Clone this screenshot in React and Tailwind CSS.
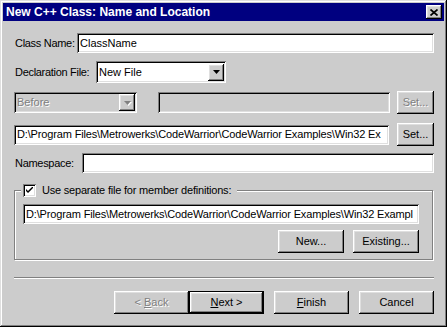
import React from 'react';

const RAISED = 'shadow-[inset_-1px_-1px_0_#000,inset_1px_1px_0_#fff,inset_-2px_-2px_0_#808080,inset_2px_2px_0_#dfdfdf]';
const SUNKEN = 'shadow-[inset_1px_1px_0_#808080,inset_-1px_-1px_0_#fff,inset_2px_2px_0_#000,inset_-2px_-2px_0_#dfdfdf]';
const DISABLED_TEXT = 'text-[#808080] [text-shadow:1px_1px_0_#fff]';

function Arrow({ disabled }) {
  return (
    <div className={'w-[16px] h-[17px] bg-[#cccccc] flex items-center justify-center shrink-0 ' + RAISED}>
      <svg width="7" height="4" viewBox="0 0 7 4" className={disabled ? 'drop-shadow-[1px_1px_0_#fff]' : ''}>
        <polygon points="0,0 7,0 3.5,4" fill={disabled ? '#808080' : '#000'} />
      </svg>
    </div>
  );
}

function Button({ className = '', disabled, children }) {
  return (
    <div className={'h-[23px] bg-[#cccccc] flex items-center justify-center shrink-0 whitespace-nowrap ' + RAISED + ' ' + (disabled ? DISABLED_TEXT : '') + ' ' + className}>
      {children}
    </div>
  );
}

function Field({ className = '', children, white = true }) {
  return (
    <div className={'h-[20px] flex items-center pl-[3px] pr-[1px] overflow-hidden whitespace-nowrap shrink-0 ' + (white ? 'bg-white ' : 'bg-[#cccccc] ') + SUNKEN + ' ' + className}>
      {children}
    </div>
  );
}

export default function App() {
  return (
    <div className={"w-[447px] h-[327px] bg-[#cccccc] p-[3px] font-['Liberation_Sans',Arial,sans-serif] text-[11px] leading-none text-black select-none shadow-[inset_-1px_-1px_0_#000,inset_1px_1px_0_#dfdfdf,inset_-2px_-2px_0_#808080,inset_2px_2px_0_#fff]"}>
      {/* title bar */}
      <div className="h-[18px] bg-[#000080] flex items-center justify-between pl-[3px] pr-[2px]">
        <span className="text-white font-bold text-[12px]">New C++ Class: Name and Location</span>
        <div className={'w-[16px] h-[14px] bg-[#cccccc] flex items-center justify-center ' + RAISED}>
          <svg width="8" height="7" viewBox="0 0 8 7">
            <path d="M0.5 0.5 L7.5 6.5 M7.5 0.5 L0.5 6.5" stroke="#000" strokeWidth="1.7" />
          </svg>
        </div>
      </div>

      <div className="ml-[11px] w-[420px]">
        {/* class name */}
        <div className="mt-[12px] h-[20px] flex items-center">
          <span className="w-[63px] pl-[1px] shrink-0 whitespace-nowrap tracking-[-0.3px]">Class Name:</span>
          <Field className="w-[357px]">ClassName</Field>
        </div>

        {/* declaration file */}
        <div className="mt-[8px] h-[22px] flex items-center">
          <span className="w-[82px] pl-[1px] shrink-0 whitespace-nowrap tracking-[-0.3px]">Declaration File:</span>
          <div className={'w-[130px] h-[22px] bg-white flex items-center pl-[3px] pr-[2px] ' + SUNKEN}>
            <span className="flex-1">New File</span>
            <Arrow />
          </div>
        </div>

        {/* disabled row */}
        <div className="mt-[9px] h-[21px] flex items-center">
          <div className={'w-[123px] h-[21px] bg-[#cccccc] flex items-center pl-[3px] pr-[2px] ' + SUNKEN}>
            <span className={'flex-1 ' + DISABLED_TEXT}>Before</span>
            <Arrow disabled />
          </div>
          <Field white={false} className="ml-[21px] w-[232px] h-[21px]" />
          <Button disabled className="ml-[7px] w-[37px] h-[21px]">Set...</Button>
        </div>

        {/* path */}
        <div className="mt-[11px] h-[21px] flex items-center">
          <Field className="w-[375px] tracking-[-0.15px]">
            {'D:\\Program Files\\Metrowerks\\CodeWarrior\\CodeWarrior Examples\\Win32 Ex'}
          </Field>
          <Button className="ml-[8px] w-[37px] h-[21px]">Set...</Button>
        </div>

        {/* namespace */}
        <div className="mt-[8px] h-[20px] flex items-center">
          <span className="w-[68px] pl-[1px] shrink-0 whitespace-nowrap tracking-[-0.3px]">Namespace:</span>
          <Field className="w-[352px]" />
        </div>

        {/* group box */}
        <div className="mt-[17px] w-[419px] border border-[#808080] shadow-[inset_1px_1px_0_#fff,1px_1px_0_#fff] pb-[6px]">
          <div className="-mt-[7px] ml-[6px] h-[13px] flex items-center w-fit bg-[#cccccc] pl-[2px] pr-[6px]">
            <div className={'w-[13px] h-[13px] bg-white flex items-center justify-center ' + SUNKEN}>
              <svg width="7" height="7" viewBox="0 0 7 7">
                <path d="M0 2 L0 4 L2 6 L7 1 L7 -1 L2 4 Z" fill="#000" />
              </svg>
            </div>
            <span className="ml-[6px] whitespace-nowrap tracking-[-0.2px]">Use separate file for member definitions:</span>
          </div>
          <Field className="mt-[7px] ml-[8px] w-[396px] tracking-[-0.15px]">
            {'D:\\Program Files\\Metrowerks\\CodeWarrior\\CodeWarrior Examples\\Win32 Exampl'}
          </Field>
          <div className="mt-[6px] flex justify-end pr-[13px]">
            <Button className="w-[66px]">New...</Button>
            <Button className="ml-[9px] w-[66px]">Existing...</Button>
          </div>
        </div>

        {/* separator */}
        <div className="mt-[17px] h-[2px] border-t border-t-[#808080] border-b border-b-white" />

        {/* wizard buttons */}
        <div className="mt-[12px] flex justify-end">
          <Button disabled className="w-[75px]">&lt;<span className="underline ml-[3px]">B</span>ack</Button>
          <div className="w-[75px] h-[23px] border border-black">
            <Button className="w-full h-full">
              <span className="underline">N</span>ext &gt;
            </Button>
          </div>
          <Button className="ml-[10px] w-[75px]"><span className="underline">F</span>inish</Button>
          <Button className="ml-[10px] w-[75px]">Cancel</Button>
        </div>
      </div>
    </div>
  );
}
